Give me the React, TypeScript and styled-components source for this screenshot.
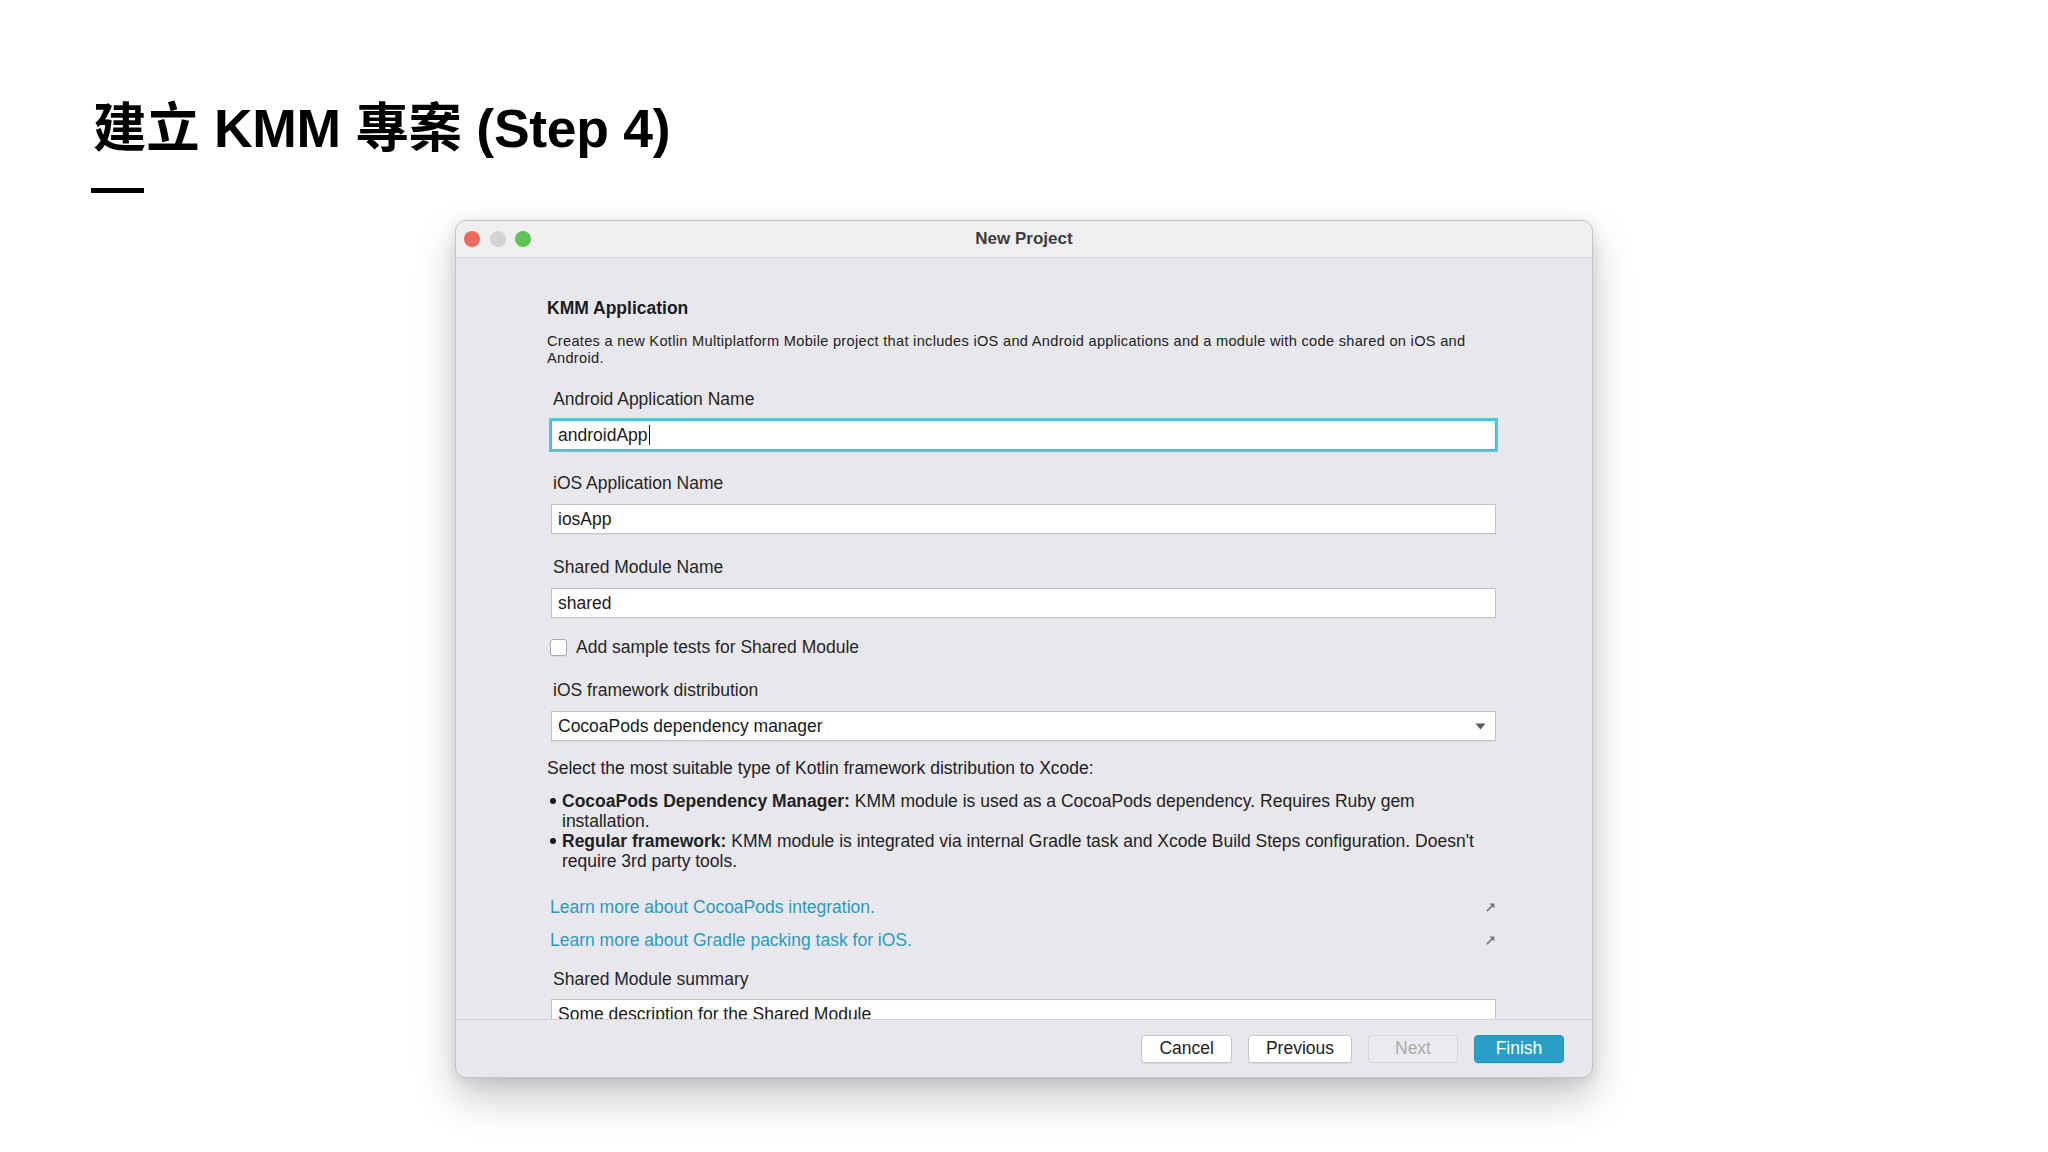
import React from 'react'
import styled, { createGlobalStyle } from 'styled-components'

const GlobalStyle = createGlobalStyle`
  html, body {
    margin: 0;
    padding: 0;
    background: #ffffff;
  }
  body {
    font-family: "Liberation Sans", "Noto Sans CJK TC", Arial, sans-serif;
    color: #1f1f1f;
  }
`

const TrafficLight = ({ color }: { color: string }) => <Light color={color} />

const ExternalArrow = () => (
  <svg width="10" height="10" viewBox="0 0 10 10">
    <path d="M1.4 8.6 L6.6 3.4" stroke="#78787a" strokeWidth="1.6" strokeLinecap="round" />
    <path d="M3.4 1.6 L8.4 1.6 L8.4 6.6 Z" fill="#78787a" />
  </svg>
)

const DropdownArrow = () => (
  <svg width="11" height="7" viewBox="0 0 11 7">
    <path d="M0.5 0.5 L10.5 0.5 L5.5 6.5 Z" fill="#5a5a5a" />
  </svg>
)

const App = () => {
  return (
    <>
      <GlobalStyle />
      <Page>
        <Header>
          <Title>建立 KMM 專案 (Step 4)</Title>
          <TitleBar />
        </Header>

        <Dialog>
          <WindowBar>
            <Lights>
              <TrafficLight color="#ec6b5f" />
              <TrafficLight color="#d3d2d5" />
              <TrafficLight color="#5fc454" />
            </Lights>
            <WindowTitle>New Project</WindowTitle>
            <span />
          </WindowBar>

          <Body>
            <Heading>KMM Application</Heading>
            <Description>
              Creates a new Kotlin Multiplatform Mobile project that includes iOS and Android
              applications and a module with code shared on iOS and Android.
            </Description>

            <Label gap={22}>Android Application Name</Label>
            <Field focused>
              androidApp
              <Caret />
            </Field>

            <Label>iOS Application Name</Label>
            <Field>iosApp</Field>

            <Label>Shared Module Name</Label>
            <Field>shared</Field>

            <CheckRow>
              <CheckBox />
              <span>Add sample tests for Shared Module</span>
            </CheckRow>

            <Label>iOS framework distribution</Label>
            <Select>
              <span>CocoaPods dependency manager</span>
              <DropdownArrow />
            </Select>

            <Text>Select the most suitable type of Kotlin framework distribution to Xcode:</Text>
            <List>
              <Item>
                <Bullet />
                <span>
                  <b>CocoaPods Dependency Manager:</b> KMM module is used as a CocoaPods
                  dependency. Requires Ruby gem installation.
                </span>
              </Item>
              <Item>
                <Bullet />
                <span>
                  <b>Regular framework:</b> KMM module is integrated via internal Gradle task and
                  Xcode Build Steps configuration. Doesn't require 3rd party tools.
                </span>
              </Item>
            </List>

            <LinkRow first>
              <Link>Learn more about CocoaPods integration.</Link>
              <ExternalArrow />
            </LinkRow>
            <LinkRow>
              <Link>Learn more about Gradle packing task for iOS.</Link>
              <ExternalArrow />
            </LinkRow>

            <Label gap={19}>Shared Module summary</Label>
            <Field gap={10}>Some description for the Shared Module</Field>
          </Body>

          <Footer>
            <Button>Cancel</Button>
            <Button>Previous</Button>
            <Button disabled>Next</Button>
            <Button primary>Finish</Button>
          </Footer>
        </Dialog>
      </Page>
    </>
  )
}

export default App

const Page = styled.div`
  width: 2048px;
  height: 1152px;
  overflow: hidden;
  background: #ffffff;
`
const Header = styled.div`
  padding-left: 91px;
`
const Title = styled.h1`
  margin: 0;
  padding: 97px 0 0 2px;
  font-family: "Liberation Sans", "Noto Sans CJK TC", sans-serif;
  font-size: 53.5px;
  line-height: 64px;
  font-weight: 700;
  color: #000;
  letter-spacing: -0.3px;
`
const TitleBar = styled.div`
  margin-top: 27px;
  width: 53px;
  height: 5px;
  background: #000;
`
const Dialog = styled.div`
  margin: 27px auto 0;
  width: 1138px;
  height: 858px;
  box-sizing: border-box;
  border: 1px solid #c4c3c7;
  border-radius: 11px;
  background: #e8e7ec;
  overflow: hidden;
  display: flex;
  flex-direction: column;
  box-shadow: 0 20px 40px rgba(0, 0, 0, 0.22), 0 2px 14px rgba(0, 0, 0, 0.1);
`
const WindowBar = styled.div`
  height: 36px;
  flex-shrink: 0;
  display: grid;
  grid-template-columns: 1fr auto 1fr;
  align-items: center;
  background: #efeef1;
  border-bottom: 1px solid #d6d5d9;
`
const Lights = styled.div`
  display: flex;
  gap: 9.5px;
  padding-left: 8px;
`
const Light = styled.span<{ color: string }>`
  width: 16px;
  height: 16px;
  border-radius: 50%;
  background: ${(p) => p.color};
`
const WindowTitle = styled.div`
  font-size: 17px;
  font-weight: 700;
  color: #3c3c3e;
`
const Body = styled.div`
  flex: 1;
  overflow: hidden;
  padding: 40px 93px 0 91px;
  display: flex;
  flex-direction: column;
`
const Heading = styled.div`
  font-size: 17.5px;
  line-height: 20px;
  font-weight: 700;
  color: #1c1c1c;
`
const Description = styled.div`
  margin-top: 15px;
  font-size: 14.6px;
  line-height: 17px;
  color: #222;
  letter-spacing: 0.3px;
`
const Label = styled.div<{ gap?: number }>`
  margin-top: ${(p) => p.gap ?? 23}px;
  padding-left: 6px;
  font-size: 17.5px;
  line-height: 20px;
  color: #262626;
`
const Field = styled.div<{ focused?: boolean; gap?: number }>`
  margin: ${(p) => p.gap ?? 11}px 3px 0 4px;
  height: 30px;
  flex-shrink: 0;
  box-sizing: border-box;
  display: flex;
  align-items: center;
  padding-left: 6px;
  background: #ffffff;
  border: 1px solid ${(p) => (p.focused ? '#4fb2d8' : '#c3c2c6')};
  box-shadow: ${(p) =>
    p.focused ? '0 0 0 2px #63bedf' : '0 1px 0 rgba(0, 0, 0, 0.04)'};
  font-size: 17.5px;
  color: #1a1a1a;
`
const Caret = styled.span`
  display: inline-block;
  width: 1px;
  height: 20px;
  margin-left: 1px;
  background: #111;
`
const CheckRow = styled.label`
  margin: 19px 0 0 3px;
  display: flex;
  align-items: center;
  gap: 9px;
  height: 20px;
  font-size: 17.5px;
  color: #262626;
`
const CheckBox = styled.span`
  width: 17px;
  height: 17px;
  box-sizing: border-box;
  border: 1px solid #a9a8ac;
  border-radius: 3px;
  background: #fff;
  box-shadow: 0 1px 1px rgba(0, 0, 0, 0.06);
`
const Select = styled(Field)`
  justify-content: space-between;
  padding-right: 9px;
`
const Text = styled.div`
  margin-top: 17px;
  font-size: 17.5px;
  line-height: 20px;
  color: #222;
`
const List = styled.div`
  margin-top: 13px;
  display: flex;
  flex-direction: column;
`
const Item = styled.div`
  display: flex;
  font-size: 17.5px;
  line-height: 20px;
  color: #222;
  b {
    font-weight: 700;
  }
`
const Bullet = styled.span`
  flex-shrink: 0;
  width: 15px;
  height: 20px;
  display: flex;
  align-items: center;
  padding-left: 3px;
  box-sizing: border-box;
  &::before {
    content: '';
    width: 6px;
    height: 6px;
    border-radius: 50%;
    background: #1a1a1a;
  }
`
const LinkRow = styled.div<{ first?: boolean }>`
  margin-top: ${(p) => (p.first ? 26 : 13)}px;
  padding: 0 3px 0 3px;
  display: flex;
  justify-content: space-between;
  align-items: center;
  height: 20px;
`
const Link = styled.a`
  font-size: 17.5px;
  color: #2b9bc2;
  text-decoration: none;
  cursor: pointer;
`
const Footer = styled.div`
  height: 58px;
  flex-shrink: 0;
  box-sizing: border-box;
  border-top: 1px solid #d3d2d6;
  display: flex;
  justify-content: flex-end;
  align-items: center;
  gap: 16px;
  padding-right: 28px;
`
const Button = styled.button<{ primary?: boolean }>`
  min-width: 90px;
  height: 28px;
  padding: 0 17px;
  box-sizing: border-box;
  border-radius: 4px;
  font-family: "Liberation Sans", Arial, sans-serif;
  font-size: 17.5px;
  border: 1px solid ${(p) => (p.primary ? '#2595bb' : '#c6c5c9')};
  background: ${(p) => (p.primary ? '#29a0c7' : '#ffffff')};
  color: ${(p) => (p.primary ? '#ffffff' : '#222')};
  box-shadow: 0 1px 1px rgba(0, 0, 0, 0.08);
  &:disabled {
    background: #ebeaee;
    border-color: #d7d6da;
    color: #ababad;
    box-shadow: none;
  }
`
